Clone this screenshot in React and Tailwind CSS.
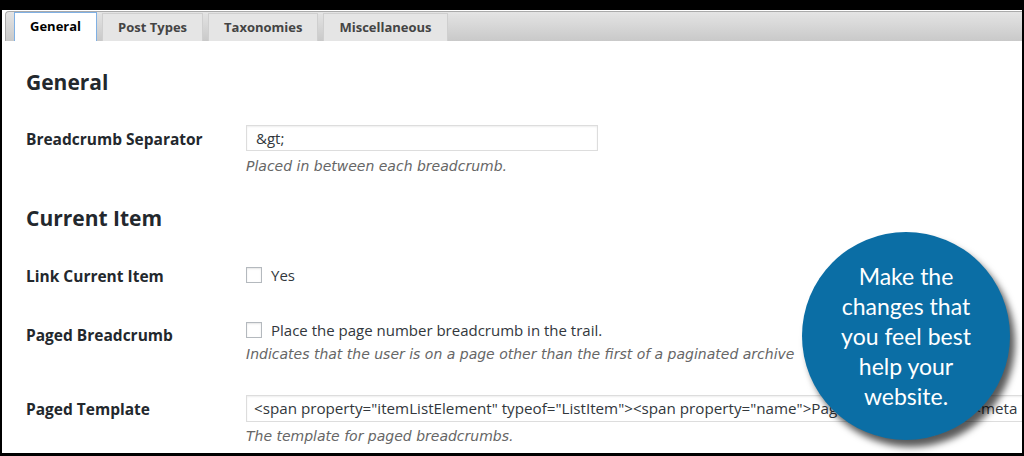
import React from "react";

const tabs = ["General", "Post Types", "Taxonomies", "Miscellaneous"];

const Checkbox = () => (
  <span className="inline-block w-[16px] h-[16px] bg-white border border-[#b4b9be] shadow-[inset_0_1px_2px_rgba(0,0,0,0.1)] shrink-0"></span>
);

const App = () => {
  return (
    <div className="w-[1024px] h-[456px] bg-black pt-[10px] pl-[2px] pr-[2px] pb-[3px] font-['Open_Sans',sans-serif] text-[#23282d]">
      <div className="relative w-full h-full bg-white overflow-hidden">
        {/* Tab bar */}
        <div className="mt-[1px] ml-[3px] h-[30px] flex items-end gap-[5px] pl-[8px] rounded-tl-[4px] border-t border-l border-[#aaaaaa] bg-gradient-to-b from-[#e4e4e4] to-[#c9c9c9]">
          {tabs.map((t, i) =>
            i === 0 ? (
              <div
                key={t}
                className="h-[29px] px-[15px] flex items-center bg-white border border-[#7fb0e4] border-b-0 text-[13px] font-bold text-black"
              >
                {t}
              </div>
            ) : (
              <div
                key={t}
                className="h-[28px] px-[15px] flex items-center bg-[#e5e5e5] border border-[#cfcfcf] border-b-0 text-[13px] font-bold text-[#444]"
              >
                {t}
              </div>
            )
          )}
        </div>

        <div className="pl-[24px]">
          <h2 className="mt-[27px] text-[21px] leading-[28px] font-bold">General</h2>

          {/* Breadcrumb Separator */}
          <div className="flex items-start">
            <div className="w-[220px] mt-[33px] text-[15.5px] leading-[20px] font-bold">Breadcrumb Separator</div>
            <div className="mt-[29px]">
              <div className="w-[352px] h-[26px] border border-[#dddddd] shadow-[inset_0_1px_2px_rgba(0,0,0,0.07)] pl-[9px] text-[15px] leading-[24px] text-[#32373c]">
                &amp;gt;
              </div>
              <p className="mt-[5px] font-['DejaVu_Sans',sans-serif] text-[14px] leading-[20px] italic text-[#666]">Placed in between each breadcrumb.</p>
            </div>
          </div>

          <h2 className="mt-[28px] text-[21px] leading-[28px] font-bold">Current Item</h2>

          {/* Link Current Item */}
          <div className="flex items-start">
            <div className="w-[220px] mt-[34px] text-[15.5px] leading-[20px] font-bold">Link Current Item</div>
            <div className="mt-[33px] h-[20px] flex items-center gap-[9px] text-[15px] text-[#32373c]">
              <Checkbox />
              <span>Yes</span>
            </div>
          </div>

          {/* Paged Breadcrumb */}
          <div className="flex items-start">
            <div className="w-[220px] mt-[39px] text-[15.5px] leading-[20px] font-bold">Paged Breadcrumb</div>
            <div className="mt-[34px]">
              <div className="h-[20px] flex items-center gap-[9px] text-[15px] text-[#32373c]">
                <Checkbox />
                <span>Place the page number breadcrumb in the trail.</span>
              </div>
              <p className="mt-[4px] font-['DejaVu_Sans',sans-serif] text-[14px] leading-[20px] italic text-[#666] whitespace-nowrap">
                Indicates that the user is on a page other than the first of a paginated archive
              </p>
            </div>
          </div>

          {/* Paged Template */}
          <div className="flex items-start">
            <div className="w-[220px] shrink-0 mt-[35px] text-[15.5px] leading-[20px] font-bold">Paged Template</div>
            <div className="mt-[31px] flex-1 min-w-0">
              <div className="h-[27px] border border-[#dddddd] border-r-0 shadow-[inset_0_1px_2px_rgba(0,0,0,0.07)] pl-[7px] text-[15.2px] leading-[25px] text-[#32373c] whitespace-nowrap overflow-hidden">
                {'<span property="itemListElement" typeof="ListItem"><span property="name">Page %htitle%</span> <meta property="position" content="%position%"></span>'}
              </div>
              <p className="mt-[4px] font-['DejaVu_Sans',sans-serif] text-[14px] leading-[20px] italic text-[#666]">The template for paged breadcrumbs.</p>
            </div>
          </div>
        </div>

        {/* Callout bubble */}
        <div className="absolute left-[800px] top-[222px] w-[208px] h-[208px] rounded-full bg-[#0b6ea5] shadow-[5px_7px_7px_rgba(0,0,0,0.65)] flex items-center justify-center text-center text-white font-['Lato',sans-serif] text-[23px] leading-[30px]">
          <p>
            Make the
            <br />
            changes that
            <br />
            you feel best
            <br />
            help your
            <br />
            website.
          </p>
        </div>
      </div>
    </div>
  );
};

export default App;
